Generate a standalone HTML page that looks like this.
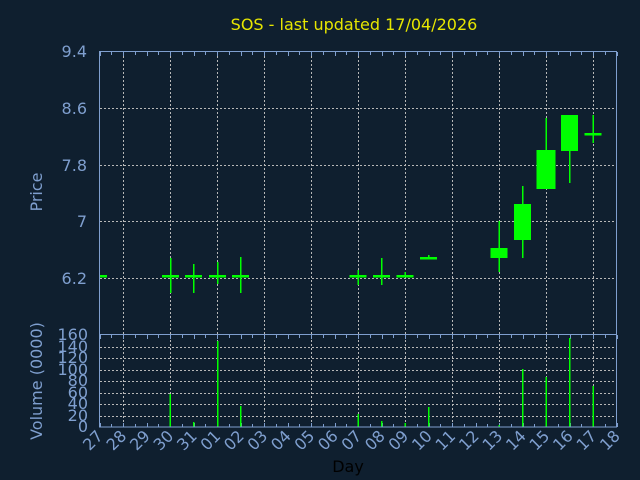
<!DOCTYPE html>
<html><head><meta charset="utf-8"><style>
html,body{margin:0;padding:0;background:#0f1f2f;width:640px;height:480px;overflow:hidden}
svg{display:block}
text{font-family:"DejaVu Sans","Liberation Sans",sans-serif;fill:#7f9fcf}
</style></head><body>
<svg id="s" width="640" height="480" xmlns="http://www.w3.org/2000/svg">
<rect width="640" height="480" fill="#0f1f2f"/>
<g id="grid"></g>
<g id="cand"></g>
<rect x="99.5" y="51.5" width="517" height="375.5" fill="none" stroke="#7f9fcf" stroke-width="1"/>
<line x1="99.5" y1="334.5" x2="616.5" y2="334.5" stroke="#7f9fcf"/>
<text x="354" y="30" text-anchor="middle" font-size="16" style="fill:#e6e600">SOS - last updated 17/04/2026</text>
<g font-size="16" text-anchor="end">
<text x="87" y="57">9.4</text>
<text x="87" y="114">8.6</text>
<text x="87" y="171">7.8</text>
<text x="87" y="227">7</text>
<text x="87" y="284">6.2</text>
</g>
<g font-size="16" text-anchor="end">
<text x="88" y="340">160</text><text x="88" y="352">140</text><text x="88" y="363">120</text><text x="88" y="375">100</text><text x="88" y="386">80</text><text x="88" y="398">60</text><text x="88" y="409">40</text><text x="88" y="421">20</text><text x="88" y="432">0</text>
</g>
<text transform="translate(42,192) rotate(-90)" text-anchor="middle" font-size="16">Price</text>
<text transform="translate(42,381) rotate(-90)" text-anchor="middle" font-size="16">Volume (0000)</text>
<text x="348" y="472" text-anchor="middle" font-size="16" style="fill:#000">Day</text>
<g font-size="16" text-anchor="end">
<text transform="translate(104,437) rotate(-45)">27</text><text transform="translate(127.5,437) rotate(-45)">28</text><text transform="translate(151,437) rotate(-45)">29</text><text transform="translate(174.5,437) rotate(-45)">30</text><text transform="translate(198,437) rotate(-45)">31</text><text transform="translate(221.5,437) rotate(-45)">01</text><text transform="translate(245,437) rotate(-45)">02</text><text transform="translate(268.5,437) rotate(-45)">03</text><text transform="translate(292,437) rotate(-45)">04</text><text transform="translate(315.5,437) rotate(-45)">05</text><text transform="translate(339,437) rotate(-45)">06</text><text transform="translate(362.5,437) rotate(-45)">07</text><text transform="translate(386,437) rotate(-45)">08</text><text transform="translate(409.5,437) rotate(-45)">09</text><text transform="translate(433,437) rotate(-45)">10</text><text transform="translate(456.5,437) rotate(-45)">11</text><text transform="translate(480,437) rotate(-45)">12</text><text transform="translate(503.5,437) rotate(-45)">13</text><text transform="translate(527,437) rotate(-45)">14</text><text transform="translate(550.5,437) rotate(-45)">15</text><text transform="translate(574,437) rotate(-45)">16</text><text transform="translate(597.5,437) rotate(-45)">17</text><text transform="translate(621,437) rotate(-45)">18</text>
</g>
</svg>
<script>
var NS="http://www.w3.org/2000/svg";
function el(p,t,a){var e=document.createElementNS(NS,t);for(var k in a)e.setAttribute(k,a[k]);p.appendChild(e);return e;}
var g=document.getElementById('grid'),c=document.getElementById('cand');
var dash={stroke:'#b8b8b8','stroke-dasharray':'2,2','stroke-width':1};
for(var i=0;i<11;i++){var x=123.5+47*i;var a=Object.assign({x1:x,x2:x,y1:52,y2:427},dash);el(g,'line',a);}
[108,165,221,278].forEach(function(y){el(g,'line',Object.assign({x1:100,x2:616,y1:y+.5,y2:y+.5},dash));});
for(var v=1;v<8;v++){var y=Math.round(427-v*11.5)+.5;el(g,'line',Object.assign({x1:100,x2:616,y1:y,y2:y},dash));}
for(var i=0;i<=44;i++){var x=Math.round(99.5+11.75*i)+.5;var L=(i%2==0)?4:3;
 el(g,'line',{x1:x,x2:x,y1:52,y2:52+L,stroke:'#7f9fcf'});
 el(g,'line',{x1:x,x2:x,y1:335,y2:335+L,stroke:'#7f9fcf'});
 el(g,'line',{x1:x,x2:x,y1:427,y2:427-L,stroke:'#7f9fcf'});}
var G='#00ff00';
function cross(x,y,w1,w2){el(c,'rect',{x:x-8.5,y:y-1,width:17,height:2.5,fill:G});el(c,'rect',{x:x-0.5,y:w1,width:1.5,height:w2-w1,fill:G});}
function body(x,t,b,w1,w2,w){w=w||17;el(c,'rect',{x:x-0.5,y:w1,width:1.5,height:w2-w1,fill:G});el(c,'rect',{x:x-w/2,y:t,width:w,height:b-t,fill:G});}
el(c,'rect',{x:99,y:275,width:8,height:2.5,fill:G});
cross(170.5,276,258,293);cross(193.5,276,264,293);cross(217.5,276,262,284);cross(240.5,276,257,293);
cross(358,276,270,285);cross(381.5,276,258,285);cross(405,276,272,277);cross(428.5,258,255,259);
body(499,248,258,221,272);body(522.5,204,240,186,258);body(546,150,189,118,189,19);body(569.5,115,151,115,183);
cross(593,134,115,143);
[[170,394],[193.5,422],[217.5,341],[240.5,406],[358,414],[381.5,421],[405,423],[428.5,407],[499,425],[522.5,369],[546,377],[569.5,338],[593,386]].forEach(function(b){el(c,'rect',{x:b[0]-0.5,y:b[1],width:1.5,height:427-b[1],fill:G});});
</script>
</body></html>
